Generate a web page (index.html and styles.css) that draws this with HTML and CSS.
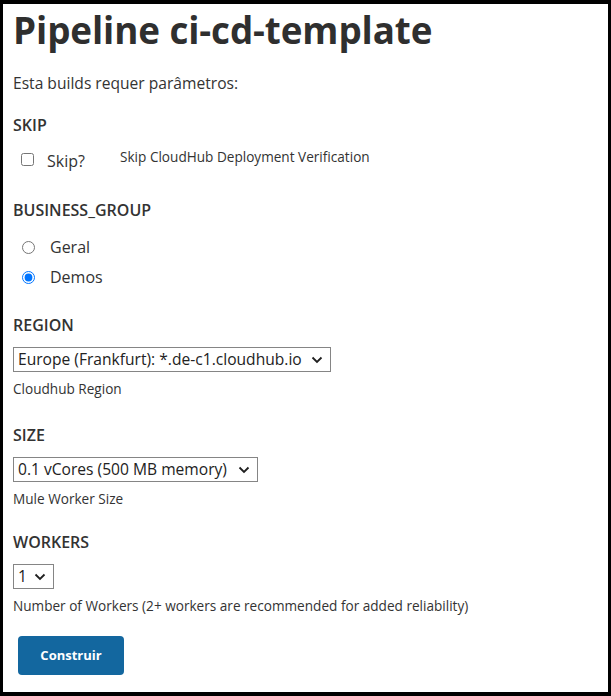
FILE: index.html
```html
<!DOCTYPE html>
<html lang="pt">
<head>
<meta charset="utf-8">
<title>Pipeline ci-cd-template</title>
<link rel="stylesheet" href="styles.css">
</head>
<body>
<div class="frame">
  <h1 class="title">Pipeline ci-cd-template</h1>
  <p class="intro">Esta builds requer parâmetros:</p>

  <div class="param param--first">
    <div class="param-name">SKIP</div>
    <div class="check-row">
      <label class="check-label"><input type="checkbox" class="check"><span>Skip?</span></label>
      <span class="check-desc">Skip CloudHub Deployment Verification</span>
    </div>
  </div>

  <div class="param param--loose">
    <div class="param-name">BUSINESS_GROUP</div>
    <div class="radios">
      <label class="radio-row"><input type="radio" name="bg" class="radio"><span>Geral</span></label>
      <label class="radio-row"><input type="radio" name="bg" class="radio" checked><span>Demos</span></label>
    </div>
  </div>

  <div class="param">
    <div class="param-name">REGION</div>
    <div class="select-wrap select-wrap--region">
      <select class="select"><option>Europe (Frankfurt): *.de-c1.cloudhub.io</option></select>
      <svg class="chev" width="12" height="8" viewBox="0 0 12 8"><path d="M1.5 1.5 6 6l4.5-4.5" fill="none" stroke="#1f1f1f" stroke-width="1.8"/></svg>
    </div>
    <div class="help">Cloudhub Region</div>
  </div>

  <div class="param">
    <div class="param-name">SIZE</div>
    <div class="select-wrap select-wrap--size">
      <select class="select"><option>0.1 vCores (500 MB memory)</option></select>
      <svg class="chev" width="12" height="8" viewBox="0 0 12 8"><path d="M1.5 1.5 6 6l4.5-4.5" fill="none" stroke="#1f1f1f" stroke-width="1.8"/></svg>
    </div>
    <div class="help">Mule Worker Size</div>
  </div>

  <div class="param param--tight">
    <div class="param-name">WORKERS</div>
    <div class="select-wrap select-wrap--workers">
      <select class="select"><option>1</option></select>
      <svg class="chev" width="12" height="8" viewBox="0 0 12 8"><path d="M1.5 1.5 6 6l4.5-4.5" fill="none" stroke="#1f1f1f" stroke-width="1.8"/></svg>
    </div>
    <div class="help">Number of Workers (2+ workers are recommended for added reliability)</div>
  </div>

  <button class="build-btn" type="button">Construir</button>
</div>
</body>
</html>
```
FILE: styles.css
```css
html, body {
  margin: 0;
  padding: 0;
  background: #ffffff;
}

.frame {
  box-sizing: border-box;
  height: 696px;
  border-style: solid;
  border-color: #000000;
  border-width: 4px 3px 4px 3px;
  padding: 3px 10px 0 10px;
  font-family: "Open Sans", "Noto Sans", sans-serif;
  color: #333333;
  background: #ffffff;
  display: flex;
  flex-direction: column;
  align-items: flex-start;
}

.title {
  margin: 0;
  font-size: 36.8px;
  line-height: 46px;
  font-weight: 700;
  color: #2f2f2f;
  letter-spacing: -0.1px;
}

.intro {
  margin: 18px 0 0 0;
  font-size: 15.6px;
  line-height: 24px;
}

.param {
  margin-top: 24px;
  display: flex;
  flex-direction: column;
  align-items: flex-start;
}

.param--first { margin-top: 17.5px; }
.param--loose { margin-top: 25px; }
.param--tight { margin-top: 21px; }

.param-name {
  font-size: 16px;
  line-height: 24px;
  font-weight: 600;
  color: #333333;
}

.check-row {
  margin-top: 12px;
  display: flex;
  align-items: flex-start;
  height: 24px;
}

.check-label {
  display: flex;
  align-items: flex-start;
  width: 99px;
  margin-left: 8px;
  font-size: 16px;
  line-height: 24px;
}

.check {
  margin: 4px 13px 0 0;
  width: 13px;
  height: 13px;
}

.check-desc {
  font-size: 13.6px;
  line-height: 16px;
  color: #333333;
}

.radios {
  margin-top: 13px;
  display: flex;
  flex-direction: column;
  gap: 6px;
}

.radio-row {
  display: flex;
  align-items: flex-start;
  margin-left: 9px;
  font-size: 16px;
  line-height: 24px;
}

.radio {
  margin: 6px 15px 0 0;
  width: 13px;
  height: 13px;
}

.select-wrap {
  position: relative;
  margin-top: 10px;
  display: inline-block;
}

.select-wrap--region { width: 318px; }
.select-wrap--size { width: 245px; }
.select-wrap--workers { width: 41px; }

.select {
  -webkit-appearance: none;
  appearance: none;
  box-sizing: border-box;
  width: 100%;
  height: 25px;
  margin: 0;
  padding: 0 20px 0 4px;
  border: 1px solid #858585;
  border-radius: 0;
  background: #ffffff;
  font-family: "Open Sans", "Noto Sans", sans-serif;
  font-size: 15.6px;
  line-height: 23px;
  color: #222222;
  display: block;
}

.chev {
  position: absolute;
  right: 8px;
  top: 9px;
  pointer-events: none;
}

.help {
  margin-top: 7px;
  font-size: 13.6px;
  line-height: 20px;
  color: #333333;
}

.build-btn {
  margin-top: 20px;
  margin-left: 5px;
  width: 106px;
  height: 39px;
  border: none;
  border-radius: 4px;
  background: #13679f;
  color: #ffffff;
  font-family: "Open Sans", "Noto Sans", sans-serif;
  font-size: 13px;
  font-weight: 700;
  padding: 0;
}
```
